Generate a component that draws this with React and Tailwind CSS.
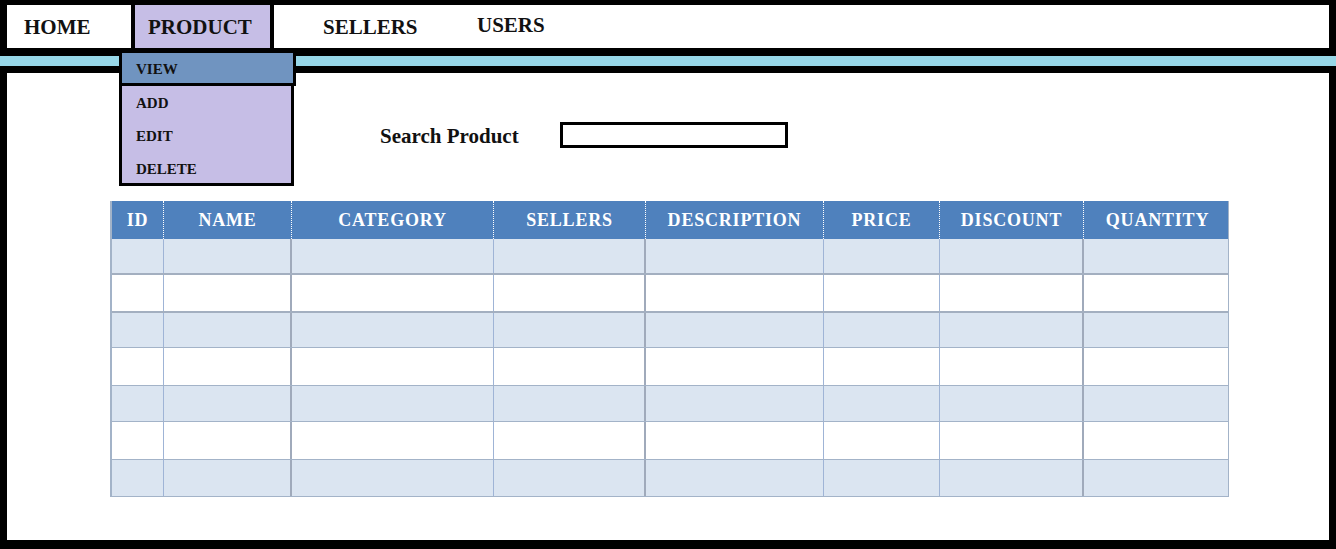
const serif = { fontFamily: '"Liberation Serif", "Times New Roman", serif' }

const HEADS = ['ID', 'NAME', 'CATEGORY', 'SELLERS', 'DESCRIPTION', 'PRICE', 'DISCOUNT', 'QUANTITY']
// thick grey line after these columns, thin blue after the rest
const THICK = [false, true, false, true, false, false, true, false]
const ROWS = [
  { h: 'h-[36px]', bg: 'bg-[#dbe5f1]', line: 'border-b-2 border-[#a3afc0]' },
  { h: 'h-[38px]', bg: 'bg-white', line: 'border-b-2 border-[#a3afc0]' },
  { h: 'h-[35px]', bg: 'bg-[#dbe5f1]', line: 'border-b border-[#a3b3c8]' },
  { h: 'h-[38px]', bg: 'bg-white', line: 'border-b border-[#a3b3c8]' },
  { h: 'h-[36px]', bg: 'bg-[#dbe5f1]', line: 'border-b border-[#a3b3c8]' },
  { h: 'h-[38px]', bg: 'bg-white', line: 'border-b border-[#a3b3c8]' },
  { h: 'h-[37px]', bg: 'bg-[#dbe5f1]', line: 'border-b border-[#a3b3c8]' },
]

const GRID = 'grid grid-cols-[52px_128px_202px_152px_178px_116px_144px_147px]'

export default function App() {
  return (
    <div className="relative w-[1336px] h-[549px] bg-black overflow-hidden flex flex-col" style={serif}>
      {/* top nav */}
      <div className="mt-[5px] mx-[7px] h-[43px] bg-white flex items-stretch font-bold text-[#111] text-[21px]">
        <div className="w-[124px] pl-[17px] pt-[3px] flex items-center">HOME</div>
        <div className="w-[143px] border-x-[4px] border-black bg-[#c6bee6] pl-[13px] pt-[3px] flex items-center">PRODUCT</div>
        <div className="w-[203px] pl-[49px] pt-[3px] flex items-center">SELLERS</div>
        <div className="flex items-center pt-[0px] pb-[2px]">USERS</div>
      </div>

      <div className="h-[8px]" />
      <div className="h-[10px] bg-[#97d7e8]" />
      <div className="h-[7px]" />

      {/* content */}
      <div className="mx-[7px] h-[467px] bg-white flex flex-col">
        <div className="h-[124px] flex items-center pl-[373px]">
          <span className="w-[180px] text-[21px] font-bold text-[#111] leading-none pt-[2px]">Search Product</span>
          <div className="w-[228px] h-[26px] border-[3px] border-black bg-white" />
        </div>

        <div className="mt-[4px] ml-[103px] w-[1119px] border-l-2 border-r border-[#a3b3c8]">
          <div className={`${GRID} h-[38px] bg-[#4f81bd]`}>
            {HEADS.map((h, i) => (
              <div
                key={h}
                className={`flex items-center justify-center text-white font-bold text-[18px] tracking-[0.8px] pt-[1px] ${i < 7 ? 'border-r border-dotted border-white' : ''}`}
              >
                {h}
              </div>
            ))}
          </div>
          {ROWS.map((r, ri) => (
            <div key={ri} className={`${GRID} ${r.h} ${r.bg} ${r.line}`}>
              {HEADS.map((h, i) => (
                <div
                  key={h}
                  className={i < 7 ? (THICK[i] ? 'border-r-2 border-[#a0aabb]' : 'border-r border-[#9fb4d6]') : ''}
                />
              ))}
            </div>
          ))}
        </div>
      </div>

      {/* product dropdown */}
      <div className="absolute left-[119px] top-[50px] w-[177px] h-[36px] border-[3px] border-black bg-[#7094c0] flex items-center pl-[14px] pt-[2px] text-[15px] font-bold text-[#111]">
        VIEW
      </div>
      <div className="absolute left-[119px] top-[83px] w-[175px] h-[103px] border-[3px] border-black bg-[#c6bee6] flex flex-col pl-[14px] pt-[8px] gap-[14px] text-[15px] font-bold text-[#111] leading-[19px]">
        <span>ADD</span>
        <span>EDIT</span>
        <span>DELETE</span>
      </div>
    </div>
  )
}
